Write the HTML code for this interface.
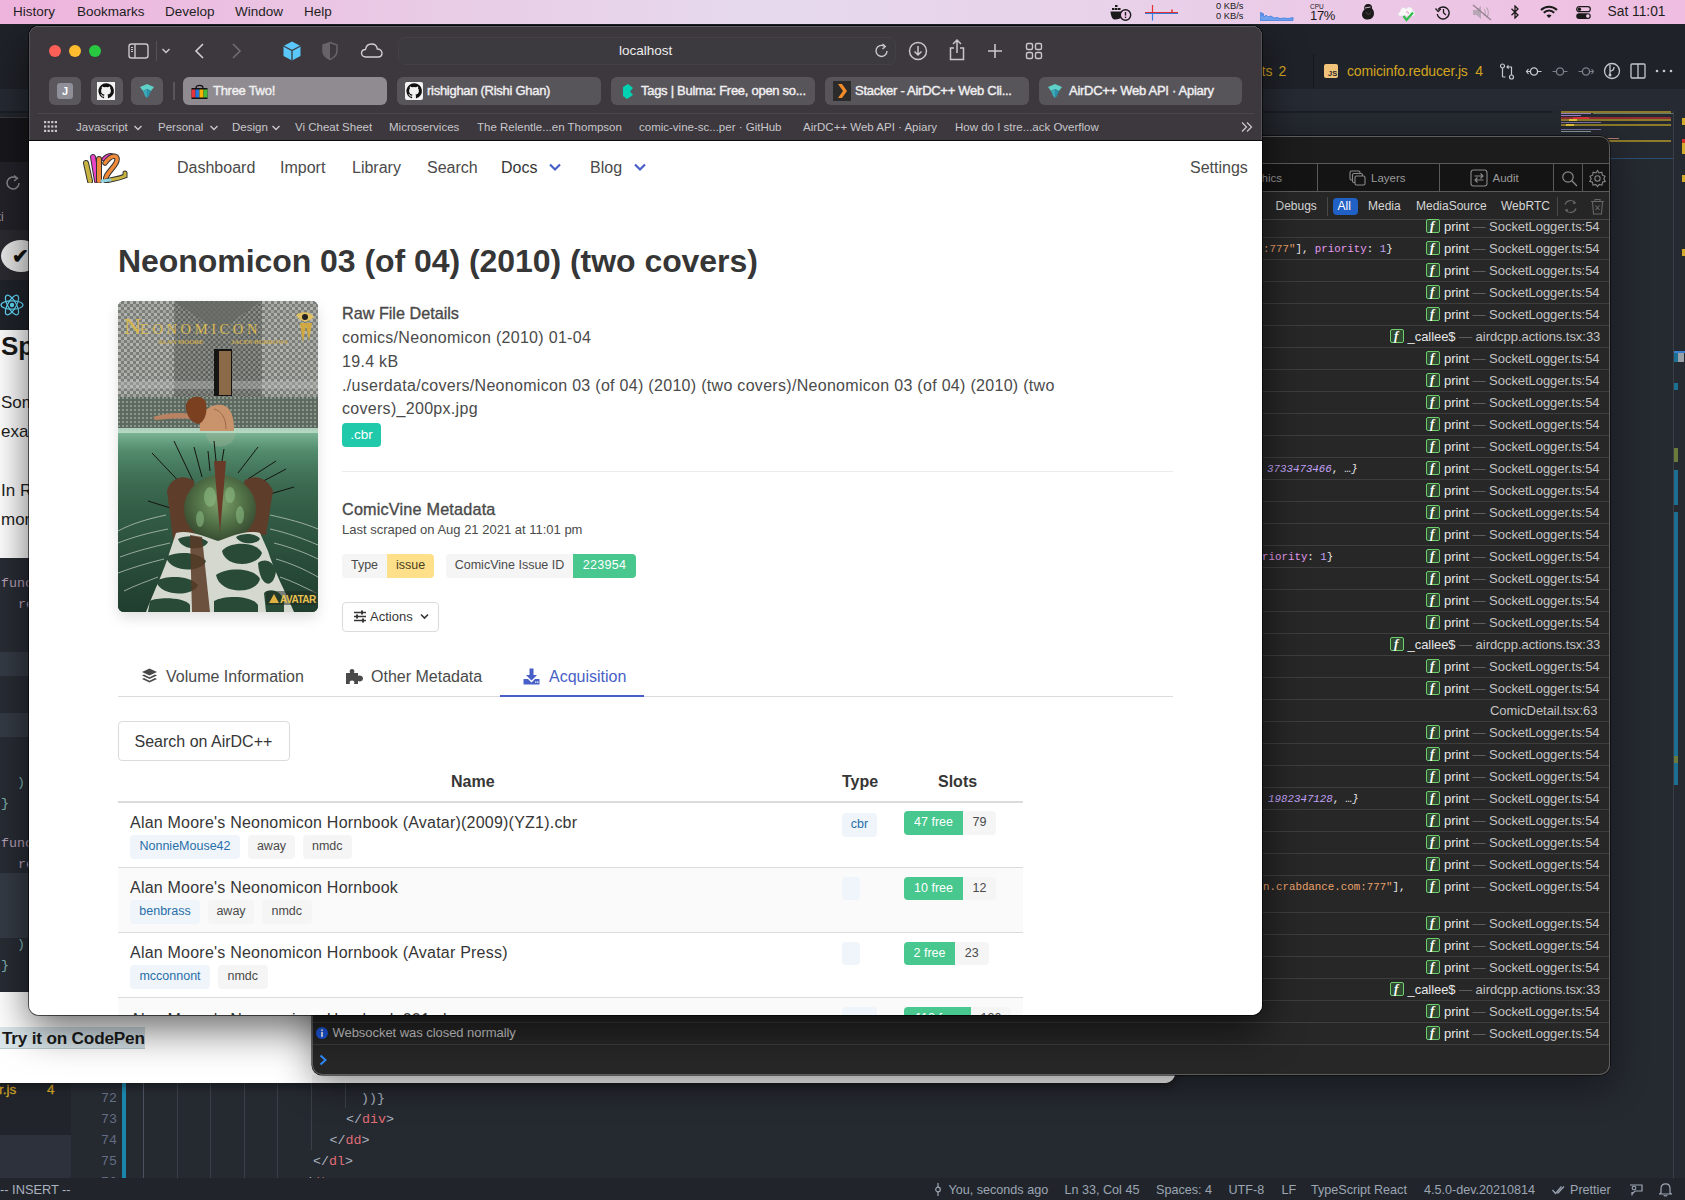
<!DOCTYPE html>
<html><head><meta charset="utf-8">
<style>
*{margin:0;padding:0;box-sizing:border-box}
html,body{width:1685px;height:1200px;overflow:hidden;background:#262a31;font-family:"Liberation Sans",sans-serif}
.a{position:absolute}
.t{position:absolute;white-space:nowrap}
#menubar{left:0;top:0;width:1685px;height:24px;background:linear-gradient(90deg,#eeb3dc 0%,#e9cbe6 25%,#e6d9ee 45%,#e8d2ea 65%,#efbde1 100%);color:#1e1e1e;font-size:13.5px}
#menubar .t{top:4px;line-height:16px}
/* vscode */
#vsc{left:0;top:24px;width:1685px;height:1176px;background:#252930}
/* middle window */
#mid{left:0;top:117px;width:1175px;height:966px;background:#fff;border-radius:0 0 10px 0;overflow:hidden;box-shadow:0 3px 10px rgba(0,0,0,.45)}
/* web inspector */
#wi{left:312px;top:136px;width:1298px;height:939px;background:#272727;border-radius:10px;overflow:hidden;box-shadow:inset 0 0 0 1px #5c5c5c,0 0 0 0.5px #000,0 10px 36px rgba(0,0,0,.42)}
/* safari */
#saf{left:29px;top:26px;width:1233px;height:989px;background:#fff;border-radius:10px;overflow:hidden;box-shadow:0 0 0 1px rgba(0,0,0,.6),0 14px 40px rgba(0,0,0,.6)}
#saf .chrome{left:0;top:0;width:1233px;height:115px;background:#3c383e;border-bottom:1px solid #0c0c0c;box-shadow:inset -1px 0 0 #56535a,inset 1px 0 0 #56535a,inset 0 1px 0 #5c5960}
#saf .ptab{top:51px;width:32px;height:28px;border-radius:6px;background:#5b585d}
#saf .tab{top:51px;width:204px;height:28px;border-radius:6px;background:#58555a}
#saf .tab.act{background:#8f8b90}
#saf .tt{top:6px;font-size:13px;line-height:16px;color:#f0eff1;font-weight:normal;-webkit-text-stroke:0.4px #f0eff1;letter-spacing:-0.28px}
#saf .bm{top:94px;font-size:11.5px;line-height:14px;color:#c8c6ca}
#saf .chev{top:98px}
#page{left:0;top:115px;width:1233px;height:874px;background:#fff;overflow:hidden}
.nav{top:16.5px;font-size:16px;line-height:20px;color:#4a4a4a}
.sub{font-size:16.2px;line-height:20px;color:#4a4a4a;font-weight:normal;-webkit-text-stroke:0.35px #4a4a4a;letter-spacing:0px}
.bd{font-size:16px;line-height:24px;color:#4a4a4a;letter-spacing:0.3px}
.tg{height:23.5px;border-radius:4px;background:#f5f5f5;color:#4a4a4a;font-size:12.5px;line-height:23.5px;text-align:center;white-space:nowrap}
.ut{background:#eff5fb;color:#296fa8}
.tabt{top:525.5px;font-size:16px;line-height:20px;color:#4a4a4a}
.th{top:630.5px;font-size:16px;line-height:20px;color:#363636;font-weight:bold}
.row{left:89px;width:905px;border-bottom:1px solid #dbdbdb}
.rt{font-size:16px;line-height:20px;color:#363636;letter-spacing:0.22px}
.wtab{top:35px;font-size:11.5px;line-height:14px;color:#9a9a9a}
.wf{top:63px;font-size:12px;line-height:14px;color:#d6d6d6}
.wr{font-size:13px;line-height:16px;color:#c4c4c4;letter-spacing:-0.05px}
.wm{font-family:"Liberation Mono",monospace;font-size:10.8px;line-height:16px;color:#e8e8e8}
.os{color:#e9a26b}.op{color:#e59bf0}.on{color:#c3a3f7}
.fi{width:14.5px;height:14.5px;border:1.3px solid #6fcf6f;border-radius:2px;background:#2f4a30}
.fi span{position:absolute;left:3.5px;top:-1px;font-family:"Liberation Serif";font-style:italic;font-weight:bold;font-size:13px;line-height:14px;color:#fff}
.mono{font-family:"Liberation Mono",monospace;font-size:13.3px;line-height:18px}
.sbt{top:1157.5px;font-size:12.6px;line-height:16px;color:#9da5b4}
</style></head><body>
<div id="vsc" class="a"><div class="a" style="left:0px;top:0px;width:1685px;height:65px;background:#1f2229;"></div>
<div class="a" style="left:1313px;top:30px;width:1px;height:35px;background:#15171b;"></div>
<div class="a" style="left:0px;top:65px;width:1685px;height:22px;background:#262a32;"></div>
<div class="a" style="left:0px;top:86.5px;width:1553px;height:2px;background:#1c1f24;"></div>
<span class="t" style="left:1261.5px;top:39px;font-size:14px;line-height:16px;color:#d3a520">ts</span><span class="t" style="left:1278.5px;top:39px;font-size:14px;line-height:16px;color:#d3a520">2</span>
<div class="a" style="left:1324px;top:40px;width:14px;height:14px;background:#f1c27a;border-radius:2px"><span style="position:absolute;left:4px;top:4.5px;font-size:7.5px;line-height:10px;color:#2a2a2a;font-weight:bold">JS</span></div>
<span class="t" style="left:1347px;top:39px;font-size:14px;line-height:16px;color:#d3a520;letter-spacing:-0.15px">comicinfo.reducer.js&nbsp;&nbsp;4</span>
<svg class="a" style="left:1499px;top:39px" width="16" height="17" viewBox="0 0 16 17"><circle cx="3.5" cy="3" r="2" fill="none" stroke="#c5c8ce" stroke-width="1.2"/><circle cx="12.5" cy="14" r="2" fill="none" stroke="#c5c8ce" stroke-width="1.2"/><path d="M3.5 5 V14 M12.5 12 V4 H8 M9.5 2.3 L8 4 L9.5 5.7 M3.5 14 H6.5" fill="none" stroke="#c5c8ce" stroke-width="1.2"/></svg>
<svg class="a" style="left:1525px;top:39px" width="18" height="17" viewBox="0 0 18 17"><circle cx="9" cy="8.5" r="3.6" fill="none" stroke="#c5c8ce" stroke-width="1.4"/><path d="M1.5 8.5 H5.4 M12.6 8.5 H16.5" stroke="#c5c8ce" stroke-width="1.2"/><path d="M3.5 6 L1.5 8.5 L3.5 11" fill="none" stroke="#c5c8ce" stroke-width="1.2"/></svg>
<svg class="a" style="left:1551px;top:39px" width="18" height="17" viewBox="0 0 18 17"><circle cx="9" cy="8.5" r="3.6" fill="none" stroke="#7a7f87" stroke-width="1.4"/><path d="M1.5 8.5 H5.4 M12.6 8.5 H16.5" stroke="#7a7f87" stroke-width="1.2"/></svg>
<svg class="a" style="left:1577px;top:39px" width="18" height="17" viewBox="0 0 18 17"><circle cx="9" cy="8.5" r="3.6" fill="none" stroke="#7a7f87" stroke-width="1.4"/><path d="M1.5 8.5 H5.4 M12.6 8.5 H16.5" stroke="#7a7f87" stroke-width="1.2"/><path d="M14.5 6 L16.5 8.5 L14.5 11" fill="none" stroke="#7a7f87" stroke-width="1.2"/></svg>
<svg class="a" style="left:1603px;top:38px" width="18" height="18" viewBox="0 0 18 18"><circle cx="9" cy="9" r="7.5" fill="none" stroke="#c5c8ce" stroke-width="1.3"/><path d="M7 3 V14 M7 9 C10 9 11 7 11 5" fill="none" stroke="#c5c8ce" stroke-width="1.3"/><circle cx="7" cy="13" r="1.5" fill="#c5c8ce"/></svg>
<svg class="a" style="left:1630px;top:39px" width="16" height="16" viewBox="0 0 16 16"><rect x="1" y="1" width="14" height="14" rx="1" fill="none" stroke="#c5c8ce" stroke-width="1.3"/><path d="M8 1 V15" stroke="#c5c8ce" stroke-width="1.3"/></svg>
<svg class="a" style="left:1655px;top:45px" width="18" height="4" viewBox="0 0 18 4"><circle cx="2" cy="2" r="1.3" fill="#c5c8ce"/><circle cx="9" cy="2" r="1.3" fill="#c5c8ce"/><circle cx="16" cy="2" r="1.3" fill="#c5c8ce"/></svg>
<div class="a" style="left:1561px;top:87px;width:110px;height:1.5px;background:#8d7a2a;"></div>
<div class="a" style="left:1561px;top:89px;width:30px;height:1px;background:#9a7fc0;"></div>
<div class="a" style="left:1593px;top:89px;width:80px;height:0.8px;background:#6d7a68;"></div>
<div class="a" style="left:1561px;top:91px;width:20px;height:1px;background:#9a7fc0;"></div>
<div class="a" style="left:1561px;top:93px;width:110px;height:1.5px;background:#8f2c34;"></div>
<div class="a" style="left:1573px;top:93px;width:16px;height:1.5px;background:#d7303a;"></div>
<div class="a" style="left:1561px;top:95px;width:110px;height:1.5px;background:#8d7a2a;"></div>
<div class="a" style="left:1569px;top:95px;width:8px;height:1.5px;background:#e3c23a;"></div>
<div class="a" style="left:1561px;top:98px;width:40px;height:1px;background:#7a6da0;"></div>
<div class="a" style="left:1561px;top:100px;width:110px;height:1.5px;background:#8d7a2a;"></div>
<div class="a" style="left:1566px;top:100px;width:8px;height:1.5px;background:#e3c23a;"></div>
<div class="a" style="left:1561px;top:105px;width:40px;height:1px;background:#7a6da0;"></div>
<div class="a" style="left:1561px;top:107px;width:30px;height:0.8px;background:#8a9aa0;"></div>
<div class="a" style="left:1561px;top:116px;width:110px;height:1.5px;background:#8d7a2a;"></div>
<div class="a" style="left:1589px;top:114px;width:30px;height:0.8px;background:#b07a6a;"></div>
<div class="a" style="left:1589px;top:134px;width:84px;height:1px;background:#2a4f73;"></div>
<div class="a" style="left:1589px;top:156px;width:5px;height:0.8px;background:#777;"></div>
<div class="a" style="left:1589px;top:191px;width:15px;height:0.8px;background:#777;"></div>
<div class="a" style="left:1589px;top:214px;width:10px;height:0.8px;background:#6a8a50;"></div>
<div class="a" style="left:1589px;top:221px;width:20px;height:0.8px;background:#777;"></div>
<div class="a" style="left:1589px;top:249px;width:20px;height:0.8px;background:#6a8a50;"></div>
<div class="a" style="left:1589px;top:257px;width:20px;height:0.8px;background:#b07a6a;"></div>
<div class="a" style="left:1673px;top:87px;width:1px;height:1067px;background:#3a3f48;"></div>
<div class="a" style="left:1682px;top:94px;width:3px;height:7px;background:#d4aa2a;"></div>
<div class="a" style="left:1682px;top:115px;width:3px;height:4px;background:#d4302a;"></div>
<div class="a" style="left:1682px;top:119px;width:3px;height:11px;background:#d4aa2a;"></div>
<div class="a" style="left:1682px;top:151px;width:3px;height:7px;background:#d4aa2a;"></div>
<div class="a" style="left:1682px;top:225px;width:3px;height:7px;background:#d4aa2a;"></div>
<div class="a" style="left:1674px;top:327px;width:11px;height:2px;background:#3d7fd0;"></div>
<div class="a" style="left:1678px;top:329px;width:6px;height:9px;background:#9aa0a8;"></div>
<div class="a" style="left:1674px;top:329px;width:4px;height:9px;background:#1c6f90;"></div>
<div class="a" style="left:1674px;top:359px;width:4px;height:7px;background:#1c6f90;"></div>
<div class="a" style="left:1674px;top:424px;width:4px;height:14px;background:#6a7a3a;"></div>
<div class="a" style="left:1674px;top:446px;width:4px;height:35px;background:#1c6f90;"></div>
<div class="a" style="left:1674px;top:488px;width:4px;height:273px;background:#1c6f90;"></div>
<div class="a" style="left:1674px;top:732px;width:4px;height:7px;background:#6a7a3a;"></div>
<div class="a" style="left:0px;top:1059px;width:71px;height:95px;background:#21252b;"></div>
<div class="a" style="left:0px;top:1111px;width:71px;height:43px;background:#2c313c;"></div>
<span class="t" style="left:-1px;top:1058px;font-size:13.5px;line-height:16px;color:#cfa325;-webkit-text-stroke:0.3px #cfa325">r.js</span>
<span class="t" style="left:47px;top:1058px;font-size:13.5px;line-height:16px;color:#cfa325;-webkit-text-stroke:0.3px #cfa325">4</span>
<span class="t mono" style="left:101px;top:1065.5px;color:#636d83">72</span>
<span class="t mono" style="left:101px;top:1086.5px;color:#636d83">73</span>
<span class="t mono" style="left:101px;top:1107.5px;color:#636d83">74</span>
<span class="t mono" style="left:101px;top:1128.5px;color:#636d83">75</span>
<span class="t mono" style="left:101px;top:1149.5px;color:#636d83">76</span>
<div class="a" style="left:122px;top:1059px;width:3.5px;height:95px;background:#1b86ac;"></div>
<div class="a" style="left:143px;top:1059px;width:1px;height:95px;background:#4b5263;"></div>
<div class="a" style="left:177px;top:1059px;width:1px;height:95px;background:#3b4048;"></div>
<div class="a" style="left:210px;top:1059px;width:1px;height:95px;background:#3b4048;"></div>
<div class="a" style="left:244px;top:1059px;width:1px;height:95px;background:#3b4048;"></div>
<div class="a" style="left:277px;top:1059px;width:1px;height:95px;background:#3b4048;"></div>
<div class="a" style="left:311px;top:1059px;width:1px;height:67px;background:#3b4048;"></div>
<div class="a" style="left:345px;top:1059px;width:1px;height:25px;background:#3b4048;"></div>
<span class="t mono" style="left:361px;top:1065.5px"><span style="color:#abb2bf">))}</span></span>
<span class="t mono" style="left:346px;top:1086.5px"><span style="color:#abb2bf">&lt;/</span><span style="color:#e06c75">div</span><span style="color:#abb2bf">&gt;</span></span>
<span class="t mono" style="left:329.5px;top:1107.5px"><span style="color:#abb2bf">&lt;/</span><span style="color:#e06c75">dd</span><span style="color:#abb2bf">&gt;</span></span>
<span class="t mono" style="left:313px;top:1128.5px"><span style="color:#abb2bf">&lt;/</span><span style="color:#e06c75">dl</span><span style="color:#abb2bf">&gt;</span></span>
<span class="t mono" style="left:296px;top:1149.5px"><span style="color:#abb2bf">&lt;/</span><span style="color:#e06c75">dt</span><span style="color:#abb2bf">&gt;</span></span>
<div class="a" style="left:0px;top:1154px;width:1685px;height:22px;background:#21252b;"></div>
<span class="t sbt" style="left:0px;color:#abb2bf;font-size:12.8px">-- INSERT --</span>
<svg class="a" style="left:934px;top:1159px" width="8" height="13" viewBox="0 0 8 13"><circle cx="4" cy="6.5" r="2.3" fill="none" stroke="#9da5b4" stroke-width="1.2"/><path d="M4 0 V4.2 M4 8.8 V13" stroke="#9da5b4" stroke-width="1.2"/></svg>
<span class="t sbt" style="left:948.5px">You, seconds ago</span>
<span class="t sbt" style="left:1064.5px">Ln 33, Col 45</span>
<span class="t sbt" style="left:1156px">Spaces: 4</span>
<span class="t sbt" style="left:1228.5px">UTF-8</span>
<span class="t sbt" style="left:1281.5px">LF</span>
<span class="t sbt" style="left:1311px">TypeScript React</span>
<span class="t sbt" style="left:1424px">4.5.0-dev.20210814</span>
<span class="t sbt" style="left:1570px">Prettier</span>
<svg class="a" style="left:1552px;top:1161px" width="13" height="10" viewBox="0 0 13 10"><path d="M0.5 5 L3.5 8.5 L9.5 1.5 M5.5 8.5 L12 1.5" fill="none" stroke="#9da5b4" stroke-width="1.2"/></svg>
<svg class="a" style="left:1629px;top:1159px" width="14" height="14" viewBox="0 0 14 14"><path d="M3 12.5 V9 M1 2 H13 V8 H6 L3 11" fill="none" stroke="#9da5b4" stroke-width="1.2"/><circle cx="5" cy="5" r="1.8" fill="none" stroke="#9da5b4" stroke-width="1.1"/></svg>
<svg class="a" style="left:1659px;top:1158px" width="13" height="15" viewBox="0 0 13 15"><path d="M2 11 V6.5 C2 3.5 4 1.8 6.5 1.8 C9 1.8 11 3.5 11 6.5 V11 L12.5 12 H0.5 Z M5 13 C5 14.3 8 14.3 8 13" fill="none" stroke="#9da5b4" stroke-width="1.2"/></svg></div>
<div id="mid" class="a"><div class="a" style="left:0px;top:0px;width:1175px;height:1px;background:#3a3a3e;"></div>
<div class="a" style="left:0px;top:1px;width:1175px;height:44px;background:#18181c;"></div>
<div class="a" style="left:0px;top:45px;width:1175px;height:68px;background:#232229;"></div>
<svg class="a" style="left:3px;top:56px" width="20" height="20" viewBox="0 0 20 20"><path d="M16 10 A6 6 0 1 1 13.5 5.1" fill="none" stroke="#8a8a90" stroke-width="1.5"/><path d="M11 2.5 L14.5 5.3 L11 8" fill="none" stroke="#8a8a90" stroke-width="1.5"/></svg>
<span class="t" style="left:-5px;top:92px;font-size:12px;line-height:16px;color:#9a9aa0">ki</span>
<div class="a" style="left:0px;top:113px;width:1175px;height:50px;background:#2a2a30;"></div>
<div class="a" style="left:0px;top:123px;width:40px;height:32px;border-radius:50%;background:#e8e8e8;left:1px"></div>
<span class="t" style="left:12px;top:128px;font-size:20px;line-height:22px;color:#111;font-weight:bold">&#10004;</span>
<div class="a" style="left:0px;top:163px;width:1175px;height:50px;background:#1f232a;"></div>
<svg class="a" style="left:0px;top:175px" width="26" height="26" viewBox="0 0 26 26"><g fill="none" stroke="#61dafb" stroke-width="1.2"><ellipse cx="12" cy="13" rx="11" ry="4.2"/><ellipse cx="12" cy="13" rx="11" ry="4.2" transform="rotate(60 12 13)"/><ellipse cx="12" cy="13" rx="11" ry="4.2" transform="rotate(120 12 13)"/></g><circle cx="12" cy="13" r="2.2" fill="#61dafb"/></svg>
<span class="t" style="left:1px;top:214px;font-size:26px;line-height:30px;color:#1a1a1a;font-weight:bold">Spread</span>
<span class="t" style="left:1px;top:275px;font-size:17px;line-height:22px;color:#1e1e1e">Sometimes</span>
<span class="t" style="left:1px;top:304px;font-size:17px;line-height:22px;color:#1e1e1e">example</span>
<span class="t" style="left:1px;top:363px;font-size:17px;line-height:22px;color:#1e1e1e">In React</span>
<span class="t" style="left:1px;top:392px;font-size:17px;line-height:22px;color:#1e1e1e">more</span>
<div class="a" style="left:0px;top:441px;width:1175px;height:434px;background:#282c34;"></div>
<div class="a" style="left:0px;top:535px;width:1175px;height:24px;background:#353b45;"></div>
<div class="a" style="left:0px;top:596px;width:1175px;height:24px;background:#353b45;"></div>
<div class="a" style="left:0px;top:756px;width:1175px;height:65px;background:#353b45;"></div>
<span class="t mono" style="left:1px;top:458px;color:#b9a0b8">function</span>
<span class="t mono" style="left:18px;top:479px;color:#b9a0b8">return</span>
<span class="t mono" style="left:17px;top:657px;color:#7fb5b5">)</span>
<span class="t mono" style="left:1px;top:678px;color:#7fb5b5">}</span>
<span class="t mono" style="left:1px;top:718px;color:#b9a0b8">function</span>
<span class="t mono" style="left:18px;top:739px;color:#b9a0b8">return</span>
<span class="t mono" style="left:17px;top:819px;color:#7fb5b5">)</span>
<span class="t mono" style="left:1px;top:840px;color:#7fb5b5">}</span>
<div class="a" style="left:0;top:910px;width:145px;height:22px;background:linear-gradient(90deg,#dbe7eb,#d0dde2);border-bottom:1px solid #b9c9d0"></div>
<span class="t" style="left:2px;top:910px;font-size:17.2px;line-height:22px;color:#1b1b1b;font-weight:bold;letter-spacing:-0.2px">Try it on CodePen</span>
<div class="a" style="left:312px;top:958px;width:863px;height:8px;background:#f4f4f4;"></div></div>
<div id="wi" class="a"><div class="a" style="left:0;top:0;width:1298px;height:27px;background:#1c1c1c"></div>
<div class="a" style="left:0;top:27px;width:1298px;height:29px;background:#141414;border-top:1px solid #5a5a5a;border-bottom:1px solid #5a5a5a"></div>
<div class="a" style="left:1004.5px;top:27px;width:1px;height:29px;background:#5a5a5a"></div>
<div class="a" style="left:1126.5px;top:27px;width:1px;height:29px;background:#5a5a5a"></div>
<div class="a" style="left:1240.5px;top:27px;width:1px;height:29px;background:#5a5a5a"></div>
<div class="a" style="left:1269.5px;top:27px;width:1px;height:29px;background:#5a5a5a"></div>
<span class="t wtab" style="left:924px">Graphics</span>
<svg class="a" style="left:1037px;top:34px" width="17" height="16" viewBox="0 0 17 16"><rect x="1" y="1" width="10" height="9" rx="1.5" fill="none" stroke="#8a8a8a" stroke-width="1.1"/><rect x="3.5" y="3.5" width="10" height="9" rx="1.5" fill="#141414" stroke="#8a8a8a" stroke-width="1.1"/><rect x="6" y="6" width="10" height="9" rx="1.5" fill="#141414" stroke="#8a8a8a" stroke-width="1.1"/></svg>
<span class="t wtab" style="left:1059px">Layers</span>
<svg class="a" style="left:1158px;top:33px" width="18" height="18" viewBox="0 0 18 18"><rect x="1" y="1" width="16" height="16" rx="2.5" fill="none" stroke="#8a8a8a" stroke-width="1.1"/><path d="M4.5 7 H13 M10.5 4.5 L13 7 L10.5 9.5 M13.5 11 H5 M7.5 8.5 L5 11 L7.5 13.5" fill="none" stroke="#8a8a8a" stroke-width="1.1"/></svg>
<span class="t wtab" style="left:1180.5px">Audit</span>
<svg class="a" style="left:1249px;top:34px" width="18" height="18" viewBox="0 0 18 18"><circle cx="7" cy="7" r="5.2" fill="none" stroke="#8a8a8a" stroke-width="1.2"/><path d="M10.8 10.8 L16 16" stroke="#8a8a8a" stroke-width="1.3"/></svg>
<svg class="a" style="left:1276px;top:33px" width="19" height="19" viewBox="0 0 20 20"><path d="M10 1.5 L11.6 4.2 L14.6 3.4 L15.1 6.5 L18 7.6 L16.6 10.3 L18.2 13 L15.2 13.9 L14.8 17 L11.8 16.2 L10 18.5 L8.2 16.2 L5.2 17 L4.8 13.9 L1.8 13 L3.4 10.3 L2 7.6 L4.9 6.5 L5.4 3.4 L8.4 4.2 Z" fill="none" stroke="#8a8a8a" stroke-width="1.1"/><circle cx="10" cy="10" r="2.8" fill="none" stroke="#8a8a8a" stroke-width="1.1"/></svg>
<div class="a" style="left:0;top:57px;width:1298px;height:27px;background:#262626;border-bottom:1px solid #464646"></div>
<span class="t wf" style="left:963.5px">Debugs</span>
<div class="a" style="left:1015px;top:61px;width:1px;height:19px;background:#484848"></div>
<div class="a" style="left:1021px;top:62px;width:25px;height:17px;border-radius:4px;background:#2160c4"></div>
<span class="t wf" style="left:1025.5px;color:#fff">All</span>
<span class="t wf" style="left:1056px">Media</span>
<span class="t wf" style="left:1104px">MediaSource</span>
<span class="t wf" style="left:1189px">WebRTC</span>
<div class="a" style="left:1245px;top:61px;width:1px;height:19px;background:#484848"></div>
<svg class="a" style="left:1250px;top:62px" width="17" height="17" viewBox="0 0 17 17"><path d="M3 6.5 A6 6 0 0 1 13.5 5 M14 10.5 A6 6 0 0 1 3.5 12" fill="none" stroke="#666" stroke-width="1.2"/><path d="M12 2.5 L14 5.5 L10.8 6 Z M5 14.5 L3 11.5 L6.2 11 Z" fill="#666"/></svg>
<svg class="a" style="left:1278px;top:62px" width="15" height="17" viewBox="0 0 15 17"><path d="M1 3.5 H14 M5 3.5 V1.5 H10 V3.5 M2.5 3.5 L3.5 16 H11.5 L12.5 3.5 M5.5 7.5 L9.5 12 M9.5 7.5 L5.5 12" fill="none" stroke="#666" stroke-width="1.1"/></svg>
<div class="a" style="left:0;top:101px;width:1298px;height:1px;background:#3e3e3e"></div>
<div class="a fi" style="left:1113.5px;top:82.5px"><span>f</span></div>
<span class="t wr" style="left:1132px;top:83px"><span style="color:#e6e6e6">print</span> <span style="color:#5e5e5e">—</span> SocketLogger.ts:54</span>
<div class="a" style="left:0;top:123px;width:1298px;height:1px;background:#3e3e3e"></div>
<div class="a fi" style="left:1113.5px;top:104.5px"><span>f</span></div>
<span class="t wr" style="left:1132px;top:105px"><span style="color:#e6e6e6">print</span> <span style="color:#5e5e5e">—</span> SocketLogger.ts:54</span>
<span class="t wm" style="left:951px;top:105px"><span class="os">:777"</span>], <span class="op">priority</span>: <span class="on">1</span>}</span>
<div class="a" style="left:0;top:145px;width:1298px;height:1px;background:#3e3e3e"></div>
<div class="a fi" style="left:1113.5px;top:126.5px"><span>f</span></div>
<span class="t wr" style="left:1132px;top:127px"><span style="color:#e6e6e6">print</span> <span style="color:#5e5e5e">—</span> SocketLogger.ts:54</span>
<div class="a" style="left:0;top:167px;width:1298px;height:1px;background:#3e3e3e"></div>
<div class="a fi" style="left:1113.5px;top:148.5px"><span>f</span></div>
<span class="t wr" style="left:1132px;top:149px"><span style="color:#e6e6e6">print</span> <span style="color:#5e5e5e">—</span> SocketLogger.ts:54</span>
<div class="a" style="left:0;top:189px;width:1298px;height:1px;background:#3e3e3e"></div>
<div class="a fi" style="left:1113.5px;top:170.5px"><span>f</span></div>
<span class="t wr" style="left:1132px;top:171px"><span style="color:#e6e6e6">print</span> <span style="color:#5e5e5e">—</span> SocketLogger.ts:54</span>
<div class="a" style="left:0;top:211px;width:1298px;height:1px;background:#3e3e3e"></div>
<div class="a fi" style="left:1077.5px;top:192.5px"><span>f</span></div>
<span class="t wr" style="left:1095.5px;top:193px"><span style="color:#e6e6e6">_callee$</span> <span style="color:#5e5e5e">—</span> airdcpp.actions.tsx:33</span>
<div class="a" style="left:0;top:233px;width:1298px;height:1px;background:#3e3e3e"></div>
<div class="a fi" style="left:1113.5px;top:214.5px"><span>f</span></div>
<span class="t wr" style="left:1132px;top:215px"><span style="color:#e6e6e6">print</span> <span style="color:#5e5e5e">—</span> SocketLogger.ts:54</span>
<div class="a" style="left:0;top:255px;width:1298px;height:1px;background:#3e3e3e"></div>
<div class="a fi" style="left:1113.5px;top:236.5px"><span>f</span></div>
<span class="t wr" style="left:1132px;top:237px"><span style="color:#e6e6e6">print</span> <span style="color:#5e5e5e">—</span> SocketLogger.ts:54</span>
<div class="a" style="left:0;top:277px;width:1298px;height:1px;background:#3e3e3e"></div>
<div class="a fi" style="left:1113.5px;top:258.5px"><span>f</span></div>
<span class="t wr" style="left:1132px;top:259px"><span style="color:#e6e6e6">print</span> <span style="color:#5e5e5e">—</span> SocketLogger.ts:54</span>
<div class="a" style="left:0;top:299px;width:1298px;height:1px;background:#3e3e3e"></div>
<div class="a fi" style="left:1113.5px;top:280.5px"><span>f</span></div>
<span class="t wr" style="left:1132px;top:281px"><span style="color:#e6e6e6">print</span> <span style="color:#5e5e5e">—</span> SocketLogger.ts:54</span>
<div class="a" style="left:0;top:321px;width:1298px;height:1px;background:#3e3e3e"></div>
<div class="a fi" style="left:1113.5px;top:302.5px"><span>f</span></div>
<span class="t wr" style="left:1132px;top:303px"><span style="color:#e6e6e6">print</span> <span style="color:#5e5e5e">—</span> SocketLogger.ts:54</span>
<div class="a" style="left:0;top:343px;width:1298px;height:1px;background:#3e3e3e"></div>
<div class="a fi" style="left:1113.5px;top:324.5px"><span>f</span></div>
<span class="t wr" style="left:1132px;top:325px"><span style="color:#e6e6e6">print</span> <span style="color:#5e5e5e">—</span> SocketLogger.ts:54</span>
<span class="t wm" style="left:955px;top:325px"><i class="on">3733473466</i>, <i>…}</i></span>
<div class="a" style="left:0;top:365px;width:1298px;height:1px;background:#3e3e3e"></div>
<div class="a fi" style="left:1113.5px;top:346.5px"><span>f</span></div>
<span class="t wr" style="left:1132px;top:347px"><span style="color:#e6e6e6">print</span> <span style="color:#5e5e5e">—</span> SocketLogger.ts:54</span>
<div class="a" style="left:0;top:387px;width:1298px;height:1px;background:#3e3e3e"></div>
<div class="a fi" style="left:1113.5px;top:368.5px"><span>f</span></div>
<span class="t wr" style="left:1132px;top:369px"><span style="color:#e6e6e6">print</span> <span style="color:#5e5e5e">—</span> SocketLogger.ts:54</span>
<div class="a" style="left:0;top:409px;width:1298px;height:1px;background:#3e3e3e"></div>
<div class="a fi" style="left:1113.5px;top:390.5px"><span>f</span></div>
<span class="t wr" style="left:1132px;top:391px"><span style="color:#e6e6e6">print</span> <span style="color:#5e5e5e">—</span> SocketLogger.ts:54</span>
<div class="a" style="left:0;top:431px;width:1298px;height:1px;background:#3e3e3e"></div>
<div class="a fi" style="left:1113.5px;top:412.5px"><span>f</span></div>
<span class="t wr" style="left:1132px;top:413px"><span style="color:#e6e6e6">print</span> <span style="color:#5e5e5e">—</span> SocketLogger.ts:54</span>
<span class="t wm" style="left:950px;top:413px"><span class="op">riority</span>: <span class="on">1</span>}</span>
<div class="a" style="left:0;top:453px;width:1298px;height:1px;background:#3e3e3e"></div>
<div class="a fi" style="left:1113.5px;top:434.5px"><span>f</span></div>
<span class="t wr" style="left:1132px;top:435px"><span style="color:#e6e6e6">print</span> <span style="color:#5e5e5e">—</span> SocketLogger.ts:54</span>
<div class="a" style="left:0;top:475px;width:1298px;height:1px;background:#3e3e3e"></div>
<div class="a fi" style="left:1113.5px;top:456.5px"><span>f</span></div>
<span class="t wr" style="left:1132px;top:457px"><span style="color:#e6e6e6">print</span> <span style="color:#5e5e5e">—</span> SocketLogger.ts:54</span>
<div class="a" style="left:0;top:497px;width:1298px;height:1px;background:#3e3e3e"></div>
<div class="a fi" style="left:1113.5px;top:478.5px"><span>f</span></div>
<span class="t wr" style="left:1132px;top:479px"><span style="color:#e6e6e6">print</span> <span style="color:#5e5e5e">—</span> SocketLogger.ts:54</span>
<div class="a" style="left:0;top:519px;width:1298px;height:1px;background:#3e3e3e"></div>
<div class="a fi" style="left:1077.5px;top:500.5px"><span>f</span></div>
<span class="t wr" style="left:1095.5px;top:501px"><span style="color:#e6e6e6">_callee$</span> <span style="color:#5e5e5e">—</span> airdcpp.actions.tsx:33</span>
<div class="a" style="left:0;top:541px;width:1298px;height:1px;background:#3e3e3e"></div>
<div class="a fi" style="left:1113.5px;top:522.5px"><span>f</span></div>
<span class="t wr" style="left:1132px;top:523px"><span style="color:#e6e6e6">print</span> <span style="color:#5e5e5e">—</span> SocketLogger.ts:54</span>
<div class="a" style="left:0;top:563px;width:1298px;height:1px;background:#3e3e3e"></div>
<div class="a fi" style="left:1113.5px;top:544.5px"><span>f</span></div>
<span class="t wr" style="left:1132px;top:545px"><span style="color:#e6e6e6">print</span> <span style="color:#5e5e5e">—</span> SocketLogger.ts:54</span>
<div class="a" style="left:0;top:585px;width:1298px;height:1px;background:#3e3e3e"></div>
<span class="t wr" style="left:1178px;top:567px">ComicDetail.tsx:63</span>
<div class="a" style="left:0;top:607px;width:1298px;height:1px;background:#3e3e3e"></div>
<div class="a fi" style="left:1113.5px;top:588.5px"><span>f</span></div>
<span class="t wr" style="left:1132px;top:589px"><span style="color:#e6e6e6">print</span> <span style="color:#5e5e5e">—</span> SocketLogger.ts:54</span>
<div class="a" style="left:0;top:629px;width:1298px;height:1px;background:#3e3e3e"></div>
<div class="a fi" style="left:1113.5px;top:610.5px"><span>f</span></div>
<span class="t wr" style="left:1132px;top:611px"><span style="color:#e6e6e6">print</span> <span style="color:#5e5e5e">—</span> SocketLogger.ts:54</span>
<div class="a" style="left:0;top:651px;width:1298px;height:1px;background:#3e3e3e"></div>
<div class="a fi" style="left:1113.5px;top:632.5px"><span>f</span></div>
<span class="t wr" style="left:1132px;top:633px"><span style="color:#e6e6e6">print</span> <span style="color:#5e5e5e">—</span> SocketLogger.ts:54</span>
<div class="a" style="left:0;top:673px;width:1298px;height:1px;background:#3e3e3e"></div>
<div class="a fi" style="left:1113.5px;top:654.5px"><span>f</span></div>
<span class="t wr" style="left:1132px;top:655px"><span style="color:#e6e6e6">print</span> <span style="color:#5e5e5e">—</span> SocketLogger.ts:54</span>
<span class="t wm" style="left:956px;top:655px"><i class="on">1982347128</i>, <i>…}</i></span>
<div class="a" style="left:0;top:695px;width:1298px;height:1px;background:#3e3e3e"></div>
<div class="a fi" style="left:1113.5px;top:676.5px"><span>f</span></div>
<span class="t wr" style="left:1132px;top:677px"><span style="color:#e6e6e6">print</span> <span style="color:#5e5e5e">—</span> SocketLogger.ts:54</span>
<div class="a" style="left:0;top:717px;width:1298px;height:1px;background:#3e3e3e"></div>
<div class="a fi" style="left:1113.5px;top:698.5px"><span>f</span></div>
<span class="t wr" style="left:1132px;top:699px"><span style="color:#e6e6e6">print</span> <span style="color:#5e5e5e">—</span> SocketLogger.ts:54</span>
<div class="a" style="left:0;top:739px;width:1298px;height:1px;background:#3e3e3e"></div>
<div class="a fi" style="left:1113.5px;top:720.5px"><span>f</span></div>
<span class="t wr" style="left:1132px;top:721px"><span style="color:#e6e6e6">print</span> <span style="color:#5e5e5e">—</span> SocketLogger.ts:54</span>
<div class="a" style="left:0;top:776px;width:1298px;height:1px;background:#3e3e3e"></div>
<div class="a fi" style="left:1113.5px;top:742.5px"><span>f</span></div>
<span class="t wr" style="left:1132px;top:743px"><span style="color:#e6e6e6">print</span> <span style="color:#5e5e5e">—</span> SocketLogger.ts:54</span>
<span class="t wm" style="left:951px;top:743px"><span class="os">n.crabdance.com:777"</span>],</span>
<div class="a" style="left:0;top:798px;width:1298px;height:1px;background:#3e3e3e"></div>
<div class="a fi" style="left:1113.5px;top:779.5px"><span>f</span></div>
<span class="t wr" style="left:1132px;top:780px"><span style="color:#e6e6e6">print</span> <span style="color:#5e5e5e">—</span> SocketLogger.ts:54</span>
<div class="a" style="left:0;top:820px;width:1298px;height:1px;background:#3e3e3e"></div>
<div class="a fi" style="left:1113.5px;top:801.5px"><span>f</span></div>
<span class="t wr" style="left:1132px;top:802px"><span style="color:#e6e6e6">print</span> <span style="color:#5e5e5e">—</span> SocketLogger.ts:54</span>
<div class="a" style="left:0;top:842px;width:1298px;height:1px;background:#3e3e3e"></div>
<div class="a fi" style="left:1113.5px;top:823.5px"><span>f</span></div>
<span class="t wr" style="left:1132px;top:824px"><span style="color:#e6e6e6">print</span> <span style="color:#5e5e5e">—</span> SocketLogger.ts:54</span>
<div class="a" style="left:0;top:864px;width:1298px;height:1px;background:#3e3e3e"></div>
<div class="a fi" style="left:1077.5px;top:845.5px"><span>f</span></div>
<span class="t wr" style="left:1095.5px;top:846px"><span style="color:#e6e6e6">_callee$</span> <span style="color:#5e5e5e">—</span> airdcpp.actions.tsx:33</span>
<div class="a" style="left:0;top:886px;width:1298px;height:1px;background:#3e3e3e"></div>
<div class="a fi" style="left:1113.5px;top:867.5px"><span>f</span></div>
<span class="t wr" style="left:1132px;top:868px"><span style="color:#e6e6e6">print</span> <span style="color:#5e5e5e">—</span> SocketLogger.ts:54</span>
<div class="a" style="left:0;top:908px;width:1298px;height:1px;background:#3e3e3e"></div>
<div class="a fi" style="left:1113.5px;top:889.5px"><span>f</span></div>
<span class="t wr" style="left:1132px;top:890px"><span style="color:#e6e6e6">print</span> <span style="color:#5e5e5e">—</span> SocketLogger.ts:54</span>
<svg class="a" style="left:4px;top:891px" width="12" height="12" viewBox="0 0 12 12"><circle cx="6" cy="6" r="6" fill="#1f5be8"/><rect x="5.1" y="5" width="1.8" height="4.8" fill="#fff"/><circle cx="6" cy="3.2" r="1" fill="#fff"/></svg>
<span class="t wr" style="left:20.5px;top:889px;color:#d0d0d0">Websocket was closed normally</span>
<svg class="a" style="left:6px;top:918px" width="10" height="12" viewBox="0 0 10 12"><path d="M2.5 1.5 L7.5 6 L2.5 10.5" fill="none" stroke="#2f8cff" stroke-width="2"/></svg>
<div class="a" style="left:0;top:0;width:1298px;height:939px;border:1px solid #5e5e5e;border-radius:10px"></div></div>
<div id="saf" class="a">
  <div class="a chrome">
    <div class="a" style="left:20px;top:19px;width:12px;height:12px;border-radius:6px;background:#fe5f57"></div>
    <div class="a" style="left:40px;top:19px;width:12px;height:12px;border-radius:6px;background:#febc2e"></div>
    <div class="a" style="left:60px;top:19px;width:12px;height:12px;border-radius:6px;background:#28c840"></div>
    <svg class="a" style="left:98px;top:16px" width="24" height="20" viewBox="0 0 24 20"><rect x="2" y="2" width="19" height="14" rx="2.5" fill="none" stroke="#c9c7cb" stroke-width="1.4"/><line x1="8" y1="2" x2="8" y2="16" stroke="#c9c7cb" stroke-width="1.4"/><line x1="4" y1="5.5" x2="6" y2="5.5" stroke="#c9c7cb" stroke-width="1"/><line x1="4" y1="7.5" x2="6" y2="7.5" stroke="#c9c7cb" stroke-width="1"/><line x1="4" y1="9.5" x2="6" y2="9.5" stroke="#c9c7cb" stroke-width="1"/></svg>
    <div class="a" style="left:127px;top:15px;width:1px;height:20px;background:#545156"></div>
    <svg class="a" style="left:132px;top:21px" width="10" height="8" viewBox="0 0 10 8"><path d="M1.5 2 L5 5.5 L8.5 2" fill="none" stroke="#c9c7cb" stroke-width="1.5"/></svg>
    <svg class="a" style="left:164px;top:16px" width="14" height="18" viewBox="0 0 14 18"><path d="M10 2 L3 9 L10 16" fill="none" stroke="#d2d0d4" stroke-width="1.6"/></svg>
    <svg class="a" style="left:200px;top:16px" width="14" height="18" viewBox="0 0 14 18"><path d="M4 2 L11 9 L4 16" fill="none" stroke="#706d72" stroke-width="1.6"/></svg>
    <svg class="a" style="left:252px;top:14px" width="22" height="22" viewBox="0 0 22 22"><path d="M11 1.5 L19.5 6 L19.5 16 L11 20.5 L2.5 16 L2.5 6 Z" fill="#5ac8fa"/><path d="M2.5 6 L11 10.5 L19.5 6 M11 10.5 L11 20.5" fill="none" stroke="#3b383d" stroke-width="1.3"/></svg>
    <svg class="a" style="left:292px;top:15px" width="18" height="20" viewBox="0 0 18 20"><path d="M9 1.5 L16 4 L16 10 C16 14.5 12.5 17 9 18.5 C5.5 17 2 14.5 2 10 L2 4 Z" fill="none" stroke="#66636a" stroke-width="1.5"/><path d="M9 1.5 L2 4 L2 10 C2 14.5 5.5 17 9 18.5 Z" fill="#66636a"/></svg>
    <svg class="a" style="left:331px;top:15px" width="24" height="20" viewBox="0 0 24 20"><path d="M6 16 C3 16 1.5 14 1.5 12 C1.5 9.8 3.3 8.3 5.5 8.5 C6 5 8.5 3 11.5 3 C14.8 3 17 5.3 17.3 8 C20 8 22 10 22 12.3 C22 14.5 20.3 16 18 16 Z" fill="none" stroke="#d2d0d4" stroke-width="1.4"/></svg>
    <div class="a" style="left:369px;top:11px;width:498px;height:28px;border-radius:7px;border:1px solid #444146;background:#3d3a3f"></div>
    <span class="t" style="left:590px;top:16px;font-size:13.5px;line-height:18px;color:#ececec">localhost</span>
    <svg class="a" style="left:844px;top:16px" width="18" height="18" viewBox="0 0 18 18"><path d="M14 9 A5.5 5.5 0 1 1 11.5 4.3" fill="none" stroke="#c9c7cb" stroke-width="1.4"/><path d="M9.5 2 L12.3 4.5 L9.5 7" fill="none" stroke="#c9c7cb" stroke-width="1.4"/></svg>
    <svg class="a" style="left:878px;top:14px" width="22" height="22" viewBox="0 0 22 22"><circle cx="11" cy="11" r="8.5" fill="none" stroke="#c9c7cb" stroke-width="1.5"/><path d="M11 6 L11 15 M7.5 11.5 L11 15 L14.5 11.5" fill="none" stroke="#c9c7cb" stroke-width="1.5"/></svg>
    <svg class="a" style="left:917px;top:12px" width="22" height="24" viewBox="0 0 22 24"><path d="M11 2 L11 15 M7 6 L11 2 L15 6" fill="none" stroke="#c9c7cb" stroke-width="1.5"/><path d="M8 10 L4.5 10 L4.5 21.5 L17.5 21.5 L17.5 10 L14 10" fill="none" stroke="#c9c7cb" stroke-width="1.5"/></svg>
    <svg class="a" style="left:956px;top:15px" width="20" height="20" viewBox="0 0 20 20"><path d="M10 3 L10 17 M3 10 L17 10" fill="none" stroke="#c9c7cb" stroke-width="1.6"/></svg>
    <svg class="a" style="left:995px;top:15px" width="20" height="20" viewBox="0 0 20 20"><rect x="2.5" y="2.5" width="6" height="6" rx="1.5" fill="none" stroke="#c9c7cb" stroke-width="1.4"/><rect x="11.5" y="2.5" width="6" height="6" rx="1.5" fill="none" stroke="#c9c7cb" stroke-width="1.4"/><rect x="2.5" y="11.5" width="6" height="6" rx="1.5" fill="none" stroke="#c9c7cb" stroke-width="1.4"/><rect x="11.5" y="11.5" width="6" height="6" rx="1.5" fill="none" stroke="#c9c7cb" stroke-width="1.4"/></svg>
    <!-- tabs -->
    <div class="a ptab" style="left:20px"><div class="a" style="left:8px;top:6px;width:16px;height:16px;border-radius:3px;background:#8e8f98;color:#fff;font-size:11px;font-weight:bold;line-height:16px;text-align:center">J</div></div>
    <div class="a ptab" style="left:62px"><div class="a" style="left:6px;top:5px;width:18px;height:18px;background:#f2f2f2"></div><svg class="a" style="left:6px;top:5px" width="18" height="18" viewBox="0 0 16 16"><path fill="#111" d="M8 1.2a6.8 6.8 0 0 0-2.15 13.25c.34.06.46-.15.46-.33v-1.2c-1.9.41-2.3-.8-2.3-.8-.3-.79-.75-1-.75-1-.62-.42.05-.41.05-.41.68.05 1.04.7 1.04.7.6 1.04 1.59.74 1.98.56.06-.44.24-.74.43-.91-1.51-.17-3.1-.76-3.1-3.37 0-.74.27-1.35.7-1.83-.07-.17-.3-.87.07-1.8 0 0 .57-.19 1.87.7a6.4 6.4 0 0 1 3.4 0c1.3-.89 1.87-.7 1.87-.7.37.93.14 1.63.07 1.8.44.48.7 1.09.7 1.83 0 2.62-1.6 3.2-3.11 3.36.24.21.46.63.46 1.26v1.88c0 .18.12.4.47.33A6.8 6.8 0 0 0 8 1.2z"/></svg></div>
    <div class="a ptab" style="left:102px"><svg class="a" style="left:7px;top:5px" width="18" height="18" viewBox="0 0 18 18"><path d="M2 5 L9 2 L16 5 L13 9 L9 7 L5 9 Z" fill="#5fd0c8"/><path d="M5 9 L9 7 L9 16 L7 14 Z" fill="#3aa9b8"/><path d="M13 9 L9 7 L9 16 L11 14 Z" fill="#2b8fa8"/></svg></div>
    <div class="a" style="left:144px;top:56px;width:2px;height:18px;background:#59565b"></div>
    <div class="a tab act" style="left:154px"><svg class="a" style="left:8px;top:6px" width="17" height="17" viewBox="0 0 17 17"><path d="M5 5 C5 1.5 12 1.5 12 5" fill="none" stroke="#111" stroke-width="1.3"/><rect x="0.5" y="5" width="16" height="11" fill="#111"/><rect x="0.5" y="6.5" width="4" height="8" fill="#e8343a"/><rect x="4.5" y="6.5" width="4" height="8" fill="#2277dd"/><rect x="8.5" y="6.5" width="4" height="8" fill="#f5b000"/><rect x="12.5" y="6.5" width="4" height="8" fill="#46b83a"/></svg><span class="t tt" style="left:30px">Three Two!</span></div>
    <div class="a tab" style="left:368px"><div class="a" style="left:8px;top:5px;width:18px;height:18px;border-radius:2px;background:#f2f2f2"></div><svg class="a" style="left:8px;top:5px" width="18" height="18" viewBox="0 0 16 16"><path fill="#111" d="M8 1.2a6.8 6.8 0 0 0-2.15 13.25c.34.06.46-.15.46-.33v-1.2c-1.9.41-2.3-.8-2.3-.8-.3-.79-.75-1-.75-1-.62-.42.05-.41.05-.41.68.05 1.04.7 1.04.7.6 1.040 1.59.74 1.98.56.06-.44.24-.74.43-.91-1.51-.17-3.1-.76-3.1-3.37 0-.74.27-1.35.7-1.830-.07-.17-.3-.87.07-1.8 0 0 .57-.19 1.87.7a6.4 6.4 0 0 1 3.4 0c1.3-.89 1.87-.7 1.87-.7.37.93.14 1.63.07 1.8.44.48.7 1.09.7 1.83 0 2.62-1.6 3.2-3.11 3.36.24.21.46.63.46 1.26v1.88c0 .18.12.4.47.33A6.8 6.8 0 0 0 8 1.2z"/></svg><span class="t tt" style="left:30px">rishighan (Rishi Ghan)</span></div>
    <div class="a tab" style="left:582px"><svg class="a" style="left:10px;top:6px" width="14" height="17" viewBox="0 0 14 17"><path d="M2 4 L7 1 L12 5 L9 8.5 L12 12 L6 16 L2 13 Z" fill="#00d1b2"/></svg><span class="t tt" style="left:30px">Tags | Bulma: Free, open so...</span></div>
    <div class="a tab" style="left:796px"><div class="a" style="left:8px;top:4px;width:18px;height:20px;background:#2b2b2b"></div><svg class="a" style="left:10px;top:6px" width="14" height="16" viewBox="0 0 14 16"><path d="M3 1 L7 1 L12 8 L7 15 L3 15 L8 8 Z" fill="#f28c28"/></svg><span class="t tt" style="left:30px">Stacker - AirDC++ Web Cli...</span></div>
    <div class="a tab" style="left:1010px;width:203px"><svg class="a" style="left:7px;top:5px" width="18" height="18" viewBox="0 0 18 18"><path d="M2 5 L9 2 L16 5 L13 9 L9 7 L5 9 Z" fill="#5fd0c8"/><path d="M5 9 L9 7 L9 16 L7 14 Z" fill="#3aa9b8"/><path d="M13 9 L9 7 L9 16 L11 14 Z" fill="#2b8fa8"/></svg><span class="t tt" style="left:30px">AirDC++ Web API · Apiary</span></div>
    <div class="a" style="left:8px;top:87px;width:1217px;height:1px;background:#4a474c"></div>
    <!-- bookmarks -->
    <svg class="a" style="left:14px;top:94px" width="16" height="14" viewBox="0 0 16 14"><g fill="#c9c7cb"><rect x="1" y="1" width="2.2" height="2.2"/><rect x="4.6" y="1" width="2.2" height="2.2"/><rect x="8.2" y="1" width="2.2" height="2.2"/><rect x="11.8" y="1" width="2.2" height="2.2"/><rect x="1" y="5.4" width="2.2" height="2.2"/><rect x="4.6" y="5.4" width="2.2" height="2.2"/><rect x="8.2" y="5.4" width="2.2" height="2.2"/><rect x="11.8" y="5.4" width="2.2" height="2.2"/><rect x="1" y="9.8" width="2.2" height="2.2"/><rect x="4.6" y="9.8" width="2.2" height="2.2"/><rect x="8.2" y="9.8" width="2.2" height="2.2"/><rect x="11.8" y="9.8" width="2.2" height="2.2"/></g></svg>
    <span class="t bm" style="left:47px">Javascript</span><svg class="a chev" style="left:104px" width="10" height="8" viewBox="0 0 10 8"><path d="M1.5 2 L5 5.5 L8.5 2" fill="none" stroke="#c9c7cb" stroke-width="1.4"/></svg>
    <span class="t bm" style="left:129px">Personal</span><svg class="a chev" style="left:180px" width="10" height="8" viewBox="0 0 10 8"><path d="M1.5 2 L5 5.5 L8.5 2" fill="none" stroke="#c9c7cb" stroke-width="1.4"/></svg>
    <span class="t bm" style="left:203px">Design</span><svg class="a chev" style="left:242px" width="10" height="8" viewBox="0 0 10 8"><path d="M1.5 2 L5 5.5 L8.5 2" fill="none" stroke="#c9c7cb" stroke-width="1.4"/></svg>
    <span class="t bm" style="left:266px">Vi Cheat Sheet</span>
    <span class="t bm" style="left:360px">Microservices</span>
    <span class="t bm" style="left:448px">The Relentle...en Thompson</span>
    <span class="t bm" style="left:610px">comic-vine-sc...per · GitHub</span>
    <span class="t bm" style="left:774px">AirDC++ Web API · Apiary</span>
    <span class="t bm" style="left:926px">How do I stre...ack Overflow</span>
    <svg class="a" style="left:1211px;top:95px" width="14" height="12" viewBox="0 0 14 12"><path d="M2 1.5 L6.5 6 L2 10.5 M7 1.5 L11.5 6 L7 10.5" fill="none" stroke="#c9c7cb" stroke-width="1.3"/></svg>
  </div>
  <div class="a" id="page">
    <svg class="a" style="left:53px;top:12px" width="46" height="30" viewBox="0 0 46 30">
      <g stroke-linecap="round" fill="none">
      <path d="M4 10 L8 28" stroke="#333" stroke-width="6"/><path d="M4 10 L8 28" stroke="#c9b441" stroke-width="4"/>
      <path d="M11 4 L15 28" stroke="#333" stroke-width="6"/><path d="M11 4 L15 28" stroke="#e844c8" stroke-width="4"/>
      <path d="M17 6 L17 28" stroke="#333" stroke-width="6"/><path d="M17 6 L17 28" stroke="#ef8a3a" stroke-width="4"/>
      <path d="M22 6 C25 3 28 2 31 3" stroke="#333" stroke-width="5"/><path d="M22 6 C25 3 28 2 31 3" stroke="#e844c8" stroke-width="3"/>
      <path d="M23 10 C30 0 38 2 34 10 C31 16 22 22 24 28" stroke="#333" stroke-width="5.5"/><path d="M23 10 C30 0 38 2 34 10 C31 16 22 22 24 28" stroke="#ef8a3a" stroke-width="3.5"/>
      <path d="M24 28 C30 26 36 26 43 23 L43 20" stroke="#333" stroke-width="5"/><path d="M28 27 C32 26 37 26 43 23 L43 20" stroke="#c9b441" stroke-width="3"/><path d="M20 28 L28 27" stroke="#8fd3e0" stroke-width="3"/>
      </g></svg>
    <span class="t nav" style="left:148px">Dashboard</span>
    <span class="t nav" style="left:251px">Import</span>
    <span class="t nav" style="left:323px">Library</span>
    <span class="t nav" style="left:398px">Search</span>
    <span class="t nav" style="left:472px;color:#363636">Docs</span>
    <svg class="a" style="left:519px;top:21px" width="14" height="10" viewBox="0 0 14 10"><path d="M2 2.5 L7 7.5 L12 2.5" fill="none" stroke="#485fc7" stroke-width="2.2"/></svg>
    <span class="t nav" style="left:561px">Blog</span>
    <svg class="a" style="left:604px;top:21px" width="14" height="10" viewBox="0 0 14 10"><path d="M2 2.5 L7 7.5 L12 2.5" fill="none" stroke="#485fc7" stroke-width="2.2"/></svg>
    <span class="t nav" style="left:1161px">Settings</span>
    <span class="t" style="left:89px;top:99.5px;font-size:32px;line-height:40px;font-weight:bold;color:#363636;letter-spacing:-0.05px">Neonomicon 03 (of 04) (2010) (two covers)</span>
    <div class="a" id="cover" style="left:89px;top:160px;width:200px;height:311px;border-radius:6px;overflow:hidden;box-shadow:0 6px 14px rgba(0,0,0,.12)">
      <svg width="200" height="311" viewBox="0 0 200 311">
        <defs>
          <pattern id="chk" width="6" height="6" patternUnits="userSpaceOnUse"><rect width="6" height="6" fill="#7a7d78"/><rect width="3" height="3" fill="#b2b4af"/><rect x="3" y="3" width="3" height="3" fill="#a4a6a1"/></pattern>
          <pattern id="chk2" width="5" height="5" patternUnits="userSpaceOnUse"><rect width="5" height="5" fill="#5c605b"/><rect width="2.5" height="2.5" fill="#8f928c"/><rect x="2.5" y="2.5" width="2.5" height="2.5" fill="#858882"/></pattern>
          <pattern id="flr" width="4" height="4" patternUnits="userSpaceOnUse"><rect width="4" height="4" fill="#5e6a60"/><rect width="2" height="2" fill="#8a978c"/></pattern>
          <linearGradient id="wat" x1="0" y1="0" x2="0" y2="1"><stop offset="0" stop-color="#82bb9c"/><stop offset="0.12" stop-color="#5a9676"/><stop offset="0.45" stop-color="#3a6c52"/><stop offset="1" stop-color="#24463a"/></linearGradient>
          <linearGradient id="dk" x1="0" y1="0" x2="0" y2="1"><stop offset="0" stop-color="#2f553f" stop-opacity="0"/><stop offset="0.3" stop-color="#2f553f" stop-opacity=".5"/><stop offset="1" stop-color="#1f3a2a" stop-opacity=".7"/></linearGradient>
          <radialGradient id="dome" cx="0.5" cy="0.4" r="0.6"><stop offset="0" stop-color="#7fa06a"/><stop offset="0.5" stop-color="#55764a"/><stop offset="1" stop-color="#34472e"/></radialGradient>
        </defs>
        <rect width="200" height="311" fill="#26483a"/>
        <rect y="128" width="200" height="183" fill="url(#wat)"/>
        <rect y="0" width="200" height="100" fill="url(#chk)"/>
        <rect x="56" y="0" width="88" height="100" fill="url(#chk2)"/>
        <path d="M56 0 L100 30 L144 0 Z" fill="#666a65" opacity=".8"/>
        <rect x="0" y="80" width="200" height="8" fill="#c0c4bf" opacity=".35"/>
        <rect x="96" y="48" width="18" height="47" fill="#161412"/>
        <rect x="101" y="50" width="12" height="44" fill="#8a6a48"/>
        <rect x="0" y="96" width="200" height="34" fill="url(#flr)"/>
        <rect x="0" y="127" width="200" height="5" fill="#b8dcc6" opacity=".9"/>
        <text x="6" y="33" font-family="Liberation Serif" font-size="24" fill="#d8b850" transform="scale(1,1)">N</text>
        <text x="22" y="33" font-family="Liberation Serif" font-size="14.5" fill="#d8b850" letter-spacing="3.6">EONOMICON</text>
        <text x="40" y="43" font-family="Liberation Serif" font-size="6.5" font-weight="bold" fill="#c9a850">ALAN MOORE</text>
        <text x="113" y="43" font-family="Liberation Serif" font-size="6.5" font-weight="bold" fill="#c9a850">JACEN BURROWS</text>
        <path d="M178 14 C184 10 192 10 196 16 C190 22 183 22 178 14 Z" fill="#e0c060"/><circle cx="187" cy="16" r="3" fill="#222"/>
        <path d="M182 22 L185 42 L188 24 L191 40 L194 22 Z" fill="#d0a840"/>
        <path d="M35 116 C48 112 60 111 72 113 L73 118 C60 117 48 118 37 119 Z" fill="#b98262"/>
        <path d="M82 130 C80 112 92 102 104 104 C114 106 116 118 116 130 Z" fill="#c9946c"/><path d="M96 108 C104 110 108 118 108 128" fill="none" stroke="#9a6a4a" stroke-width="1"/>
        <path d="M68 104 C70 94 86 93 88 102 C90 112 86 122 80 123 C72 121 67 112 68 104 Z" fill="#7a4020"/>
        <path d="M88 132 C88 150 116 150 118 132 Z" fill="#9fb59a" opacity=".45"/>
        <rect x="0" y="132" width="200" height="179" fill="url(#dk)"/>
        <g stroke="#15140f" stroke-width="1">
          <path d="M70 190 L34 152 M76 182 L56 140 M84 176 L76 146 M92 170 L90 150 M98 160 L96 140 M104 160 L106 148 M120 172 L140 146 M130 178 L158 160 M138 184 L168 168 M142 196 L176 186 M62 210 L30 200"/>
        </g>
        <path d="M49 190 C52 178 64 172 76 180 L80 243 L56 246 Z" fill="#5e3e2a"/>
        <path d="M155 190 C150 178 138 172 126 180 L124 232 L148 234 Z" fill="#5e3e2a"/>
        <ellipse cx="102" cy="208" rx="36" ry="34" fill="url(#dome)"/>
        <g fill="#8fbf88" opacity=".55"><ellipse cx="92" cy="196" rx="6" ry="10"/><ellipse cx="112" cy="194" rx="5" ry="8"/><ellipse cx="122" cy="214" rx="4" ry="9"/><ellipse cx="82" cy="218" rx="4" ry="8"/></g>
        <path d="M96 160 L102 232 L108 160 Z" fill="#6a3a28"/>
        <g stroke="#c9d2c8" stroke-width="1" fill="none" opacity=".7">
          <path d="M0 230 C15 222 30 218 48 214 M0 242 C15 236 30 232 50 228 M2 256 C18 250 34 246 52 242 M0 272 C16 266 30 262 46 258 M6 290 C18 284 30 280 40 276 M152 214 C170 218 186 222 200 228 M152 228 C170 232 186 238 200 244 M156 242 C172 246 188 252 200 258 M158 258 C172 262 186 268 200 276 M162 276 C174 280 186 286 198 292"/>
        </g>
        <path d="M58 232 C70 228 88 236 100 240 C112 236 128 228 142 232 L150 250 C156 270 168 292 176 311 L28 311 C36 290 46 270 52 250 Z" fill="#d4d8cf"/>
        <g fill="#284a36">
          <path d="M60 238 C68 233 84 235 90 241 C86 250 64 250 60 238 Z"/>
          <path d="M104 250 C112 240 138 240 144 252 C140 266 108 268 104 250 Z"/>
          <path d="M118 236 C126 231 140 233 142 238 C138 244 122 244 118 236 Z"/>
          <path d="M48 256 C58 250 80 250 88 260 C84 272 52 272 48 256 Z"/>
          <path d="M98 274 C108 266 136 266 142 278 C138 294 102 294 98 274 Z"/>
          <path d="M140 262 C148 256 156 262 158 270 C156 288 142 288 140 262 Z"/>
          <path d="M38 280 C48 274 72 274 80 284 C76 296 42 296 38 280 Z"/>
          <path d="M96 300 C106 294 134 294 140 304 L140 311 L96 311 Z"/>
          <path d="M146 292 C152 286 164 290 166 300 L166 311 L148 311 Z"/>
          <path d="M32 300 C40 296 66 296 72 304 L72 311 L30 311 Z"/>
        </g>
        <path d="M72 234 L84 236 L92 311 L74 311 Z" fill="#5a3a26" opacity=".85"/>
        <rect x="148" y="290" width="50" height="14" fill="#1e2a20" opacity=".5"/><g fill="#e0b040"><path d="M151 302 L156 293 L161 302 Z"/></g>
        <text x="162" y="302" font-family="Liberation Sans" font-weight="bold" font-size="10" fill="#e8c050" letter-spacing="-0.5">AVATAR</text>
      </svg>
    </div>
    <span class="t sub" style="left:313px;top:162.4px">Raw File Details</span>
    <span class="t bd" style="left:313px;top:184.7px">comics/Neonomicon (2010) 01-04</span>
    <span class="t bd" style="left:313px;top:208.6px">19.4 kB</span>
    <span class="t bd" style="left:313px;top:232.5px">./userdata/covers/Neonomicon 03 (of 04) (2010) (two covers)/Neonomicon 03 (of 04) (2010) (two</span>
    <span class="t bd" style="left:313px;top:256px">covers)_200px.jpg</span>
    <div class="a tg" style="left:313px;top:282px;width:39px;height:24px;background:#1fc9aa;color:#fff;font-size:13.5px;line-height:24px;text-align:center;padding:0">.cbr</div>
    <div class="a" style="left:313px;top:329.5px;width:831px;height:1px;background:#ececec"></div>
    <span class="t sub" style="left:313px;top:357.6px;letter-spacing:0.2px">ComicVine Metadata</span>
    <span class="t" style="left:313px;top:380.5px;font-size:13px;line-height:16px;color:#4a4a4a">Last scraped on Aug 21 2021 at 11:01 pm</span>
    <div class="a tg" style="left:313px;top:413px;width:45px;background:#f5f5f5;border-radius:4px 0 0 4px">Type</div>
    <div class="a tg" style="left:358px;top:413px;width:47px;background:#ffe08a;color:#4a3f1e;border-radius:0 4px 4px 0">issue</div>
    <div class="a tg" style="left:417px;top:413px;width:127px;background:#f5f5f5;border-radius:4px 0 0 4px">ComicVine Issue ID</div>
    <div class="a tg" style="left:544px;top:413px;width:63px;background:#48c78e;color:#fff;border-radius:0 4px 4px 0;letter-spacing:0.3px">223954</div>
    <div class="a" style="left:313px;top:461px;width:97px;height:30px;border:1px solid #dbdbdb;border-radius:4px;background:#fff"></div>
    <svg class="a" style="left:324px;top:469px" width="14" height="13" viewBox="0 0 14 13"><g stroke="#363636" stroke-width="1.6"><path d="M1 2.5 H13 M1 6.5 H13 M1 10.5 H13"/></g><g fill="#363636"><rect x="8" y="0.5" width="2" height="4"/><rect x="3" y="4.5" width="2" height="4"/><rect x="9" y="8.5" width="2" height="4"/></g></svg>
    <span class="t" style="left:341px;top:468px;font-size:13px;line-height:16px;color:#363636">Actions</span>
    <svg class="a" style="left:391px;top:472px" width="9" height="7" viewBox="0 0 9 7"><path d="M1 1.5 L4.5 5 L8 1.5" fill="none" stroke="#363636" stroke-width="1.6"/></svg>
    <!-- tabs -->
    <div class="a" style="left:89px;top:554.5px;width:1055px;height:1px;background:#dbdbdb"></div>
    <div class="a" style="left:471px;top:554px;width:144px;height:2px;background:#485fc7"></div>
    <svg class="a" style="left:112px;top:527px" width="17" height="16" viewBox="0 0 17 16"><g fill="#4a4a4a"><path d="M8.5 0.5 L16 4 L8.5 7.5 L1 4 Z"/><path d="M1 7.5 L3 6.6 L8.5 9.2 L14 6.6 L16 7.5 L8.5 11 Z"/><path d="M1 11 L3 10.1 L8.5 12.7 L14 10.1 L16 11 L8.5 14.5 Z"/></g></svg>
    <span class="t tabt" style="left:137px">Volume Information</span>
    <svg class="a" style="left:316px;top:527px" width="19" height="17" viewBox="0 0 19 17"><path fill="#4a4a4a" d="M1 5 H5 C4 3 5 1 7 1 C9 1 10 3 9 5 H13 V8 C15 7 18 8 18 10.5 C18 13 15 14 13 13 V16 H9 C10 14 9 12.5 7 12.5 C5 12.5 4 14 5 16 H1 Z"/></svg>
    <span class="t tabt" style="left:342px">Other Metadata</span>
    <svg class="a" style="left:494px;top:527px" width="17" height="17" viewBox="0 0 17 17"><path fill="#485fc7" d="M6.5 0.5 H10.5 V7 H14 L8.5 12.5 L3 7 H6.5 Z"/><path fill="#485fc7" d="M0.5 11 H5 L8.5 14.5 L12 11 H16.5 V16.5 H0.5 Z"/><rect x="12" y="13.5" width="1.5" height="1.2" fill="#fff"/><rect x="14" y="13.5" width="1.5" height="1.2" fill="#fff"/></svg>
    <span class="t tabt" style="left:520px;color:#485fc7">Acquisition</span>
    <div class="a" style="left:89px;top:580px;width:172px;height:40px;border:1px solid #dbdbdb;border-radius:4px;background:#fff"></div>
    <span class="t" style="left:105.5px;top:590.5px;font-size:16px;line-height:20px;color:#363636">Search on AirDC++</span>
    <!-- table -->
    <span class="t th" style="left:422px">Name</span>
    <span class="t th" style="left:813px">Type</span>
    <span class="t th" style="left:909px">Slots</span>
    <div class="a" style="left:89px;top:660px;width:905px;height:2px;background:#dbdbdb"></div>
    <div class="a row" style="top:662px;height:65px;background:#fff"></div>
    <div class="a row" style="top:727px;height:65px;background:#fafafa"></div>
    <div class="a row" style="top:792px;height:65px;background:#fff"></div>
    <div class="a row" style="top:857px;height:65px;background:#fafafa"></div>
    <span class="t rt" style="left:101px;top:671.5px">Alan Moore's Neonomicon Hornbook (Avatar)(2009)(YZ1).cbr</span>
    <div class="a tg ut" style="left:101px;top:694px;width:110px">NonnieMouse42</div>
    <div class="a tg" style="left:219px;top:694px;width:47px">away</div>
    <div class="a tg" style="left:274px;top:694px;width:48.5px">nmdc</div>
    <div class="a tg ut" style="left:813px;top:672px;width:35px">cbr</div>
    <div class="a tg" style="left:875px;top:670px;width:59px;background:#48c78e;color:#fff;border-radius:4px 0 0 4px">47 free</div>
    <div class="a tg" style="left:934px;top:670px;width:33px;border-radius:0 4px 4px 0">79</div>
    <span class="t rt" style="left:101px;top:736.5px">Alan Moore's Neonomicon Hornbook</span>
    <div class="a tg ut" style="left:101px;top:759px;width:70px">benbrass</div>
    <div class="a tg" style="left:179px;top:759px;width:46px">away</div>
    <div class="a tg" style="left:233px;top:759px;width:49.5px">nmdc</div>
    <div class="a tg ut" style="left:813px;top:735.5px;width:18px"></div>
    <div class="a tg" style="left:875px;top:735.5px;width:59px;background:#48c78e;color:#fff;border-radius:4px 0 0 4px">10 free</div>
    <div class="a tg" style="left:934px;top:735.5px;width:33px;border-radius:0 4px 4px 0">12</div>
    <span class="t rt" style="left:101px;top:801.5px">Alan Moore's Neonomicon Hornbook (Avatar Press)</span>
    <div class="a tg ut" style="left:101px;top:824px;width:80px">mcconnont</div>
    <div class="a tg" style="left:189px;top:824px;width:49.5px">nmdc</div>
    <div class="a tg ut" style="left:813px;top:800.5px;width:18px"></div>
    <div class="a tg" style="left:875px;top:800.5px;width:51px;background:#48c78e;color:#fff;border-radius:4px 0 0 4px">2 free</div>
    <div class="a tg" style="left:926px;top:800.5px;width:33.5px;border-radius:0 4px 4px 0">23</div>
    <span class="t rt" style="left:101px;top:868.5px">Alan Moore's Neonomicon Hornbook 001.cbr</span>
    <div class="a tg ut" style="left:813px;top:865.5px;width:35px"></div>
    <div class="a tg" style="left:875px;top:865.5px;width:67px;background:#48c78e;color:#fff;border-radius:4px 0 0 4px">112 free</div>
    <div class="a tg" style="left:942px;top:865.5px;width:40px;border-radius:0 4px 4px 0">120</div>
  </div>
</div>
<div id="menubar" class="a">
  <span class="t" style="left:13px">History</span>
  <span class="t" style="left:77px">Bookmarks</span>
  <span class="t" style="left:165px">Develop</span>
  <span class="t" style="left:235px">Window</span>
  <span class="t" style="left:304px">Help</span>
  <span class="t" style="left:1607.5px;font-size:13.8px">Sat 11:01</span>
  <svg class="a" style="left:1110px;top:4px" width="22" height="17" viewBox="0 0 22 17"><g fill="#1a1a1a"><rect x="5" y="1" width="2.5" height="2"/><rect x="2" y="4" width="2.5" height="2"/><rect x="5" y="4" width="2.5" height="2"/><rect x="8" y="4" width="2.5" height="2"/><path d="M0.5 7.5 H14 C14.5 6.5 15.5 6 16.5 6.3 C15.5 12 11 15.5 5 15.5 C2.5 15.5 1 13 0.5 7.5 Z"/></g><circle cx="15.5" cy="11" r="5.2" fill="#ecc8e6" stroke="#1a1a1a" stroke-width="1.4"/><rect x="14.8" y="8" width="1.4" height="3.6" fill="#1a1a1a"/><rect x="14.8" y="12.6" width="1.4" height="1.4" fill="#1a1a1a"/></svg>
  <svg class="a" style="left:1145px;top:4px" width="34" height="18" viewBox="0 0 34 18"><path d="M0 8.5 H33" stroke="#e23030" stroke-width="1.2"/><path d="M0 9.5 H33" stroke="#2f7de0" stroke-width="1"/><path d="M7.5 8.5 V1" stroke="#e23030" stroke-width="1.2"/><path d="M7.5 9.5 V16.5" stroke="#2f7de0" stroke-width="1.2"/><path d="M27 8.5 V5.5" stroke="#e23030" stroke-width="1.5"/></svg>
  <span class="t" style="left:1216px;top:2px;font-size:9.3px;line-height:9.5px;color:#1a1a1a;text-align:right">0 KB/s<br>0 KB/s</span>
  <svg class="a" style="left:1260px;top:10px" width="34" height="11" viewBox="0 0 34 11"><path d="M0 10.5 V5 L1 2 L2 6 L3 3 L4 7 L6 5 L8 7 L11 6 L14 8 L17 7.5 L20 8.5 L24 8 L28 8.5 L33 7.5 V10.5 Z" fill="#6fa0ee" stroke="#3f7de0" stroke-width="0.8"/></svg>
  <span class="t" style="left:1310px;top:3px;font-size:6.5px;line-height:7px;color:#1a1a1a">CPU</span>
  <span class="t" style="left:1310px;top:9.5px;font-size:13px;line-height:12px;color:#1a1a1a;letter-spacing:-0.3px">17%</span>
  <svg class="a" style="left:1361px;top:3px" width="14" height="17" viewBox="0 0 14 17"><path d="M7 1 C10 1 11.5 3 11 5.5 C13 7 13.5 10.5 12.5 13 C11.5 15.5 9 16.5 6.5 16.5 C3.5 16.5 1 14.5 1 11.5 C1 9 2.5 7.5 3.5 6.5 C2.5 3.5 4 1 7 1 Z" fill="#1a1a1a"/><path d="M4 5 L9.5 4" stroke="#ecc8e6" stroke-width="0.9"/><path d="M5 9 C6 12 9 12 10 9.5" fill="none" stroke="#555" stroke-width="0.8"/></svg>
  <svg class="a" style="left:1397px;top:3px" width="20" height="19" viewBox="0 0 20 19"><path d="M3 13 C0.5 13 0.5 9 3 9 C3 5 7 3 9 6 C10 3 16 3 16 8 C18.5 8 18.5 13 16 13 Z" fill="#f8f8f8" stroke="#e0d0e0" stroke-width="0.6"/><path d="M6.5 13 L9.5 17 L16 9.5" fill="none" stroke="#2fbf4f" stroke-width="2.2"/><path d="M9 9 C11 8 12 10 11 11" fill="none" stroke="#e070b0" stroke-width="0.8"/></svg>
  <svg class="a" style="left:1435px;top:5px" width="16" height="15" viewBox="0 0 16 15"><path d="M3.2 4.5 A6 6 0 1 1 2.2 9" fill="none" stroke="#1a1a1a" stroke-width="1.4"/><path d="M0.5 3.5 L3.2 6.6 L5.8 3.8" fill="none" stroke="#1a1a1a" stroke-width="1.3"/><path d="M8.5 4 V7.8 L11 10" fill="none" stroke="#1a1a1a" stroke-width="1.3"/></svg>
  <svg class="a" style="left:1472px;top:4px" width="20" height="17" viewBox="0 0 20 17"><path d="M1 6 H4.5 L9 2 V15 L4.5 11 H1 Z" fill="#b8a5b5"/><path d="M12 5 C13.5 7 13.5 10 12 12 M14.5 3.5 C17 6 17 11 14.5 13.5" fill="none" stroke="#b8a5b5" stroke-width="1.2"/><path d="M1 1 L19 16" stroke="#8f7f8c" stroke-width="1.2"/></svg>
  <svg class="a" style="left:1510px;top:5px" width="10" height="14" viewBox="0 0 10 14"><path d="M1.5 3.8 L8 10 L5 13 V1 L8 4 L1.5 10.2" fill="none" stroke="#1a1a1a" stroke-width="1.3"/></svg>
  <svg class="a" style="left:1540px;top:5px" width="18" height="13" viewBox="0 0 18 13"><path d="M1 5 C5.5 0.5 12.5 0.5 17 5" fill="none" stroke="#1a1a1a" stroke-width="2"/><path d="M3.8 7.8 C6.8 4.8 11.2 4.8 14.2 7.8" fill="none" stroke="#1a1a1a" stroke-width="2"/><path d="M6.5 10.5 C8 9 10 9 11.5 10.5 L9 13 Z" fill="#1a1a1a"/></svg>
  <svg class="a" style="left:1576px;top:6px" width="15" height="13" viewBox="0 0 15 13"><rect x="0.7" y="0.7" width="13.6" height="5" rx="2.5" fill="none" stroke="#1a1a1a" stroke-width="1.2"/><circle cx="3.4" cy="3.2" r="1.7" fill="#1a1a1a"/><rect x="0.2" y="7.2" width="14.6" height="5.8" rx="2.9" fill="#1a1a1a"/><circle cx="11.8" cy="10.1" r="1.8" fill="#ecc8e6"/></svg>

</div>
</body></html>
